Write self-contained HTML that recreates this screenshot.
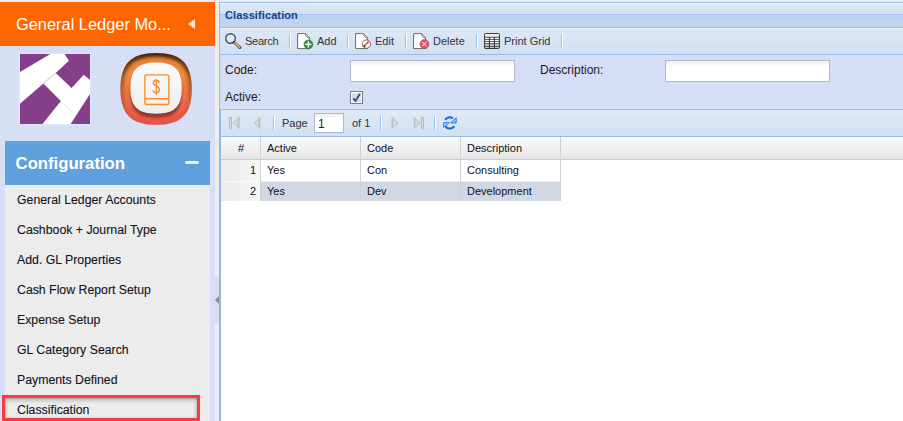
<!DOCTYPE html>
<html><head><meta charset="utf-8">
<style>
*{margin:0;padding:0;box-sizing:border-box}
html,body{width:903px;height:421px;overflow:hidden;background:#fff;font-family:"Liberation Sans",sans-serif}
.a{position:absolute}
#top{left:0;top:0;width:903px;height:2px;background:#ebebeb}
#side{left:0;top:2px;width:215px;height:419px;background:#d7dff6}
#hdr{left:0;top:2px;width:215px;height:44px;background:#ff6600}
#hdr .t{left:16px;top:12px;color:#fff;font-size:16.4px;white-space:nowrap;line-height:20px}
#tri{left:188px;top:19px;width:0;height:0;border-top:5.5px solid transparent;border-bottom:5.5px solid transparent;border-right:7px solid #ffe2cc}
#cfg{left:5px;top:141px;width:205px;height:44px;background:#60a0dd}
#cfg .t{left:10.6px;top:13px;color:#fff;font-weight:bold;font-size:16.7px;line-height:20px;white-space:nowrap}
#minus{left:185px;top:161px;width:14px;height:3px;border-radius:1.5px;background:#e6effa}
#menu{left:5px;top:185px;width:205px;height:236px;background:#ececec}
.mi{position:absolute;left:17px;font-size:12.3px;color:#14141e;white-space:nowrap;line-height:14px;-webkit-text-stroke:0.12px #14141e}
#redbox{left:2px;top:395px;width:198px;height:26px;border:3px solid #fb3a3e;box-shadow:inset 0 2px 4px rgba(0,0,0,.28),inset 0 0 2px rgba(0,0,0,.2)}
#split{left:215px;top:2px;width:4px;height:419px;background:#eeedec}
#splitc{left:215px;top:276px;width:4px;height:48px;background:#dedede}
#splitarr{left:215px;top:296px;width:0;height:0;border-top:4px solid transparent;border-bottom:4px solid transparent;border-right:4px solid #8a8a8a}

#panel{left:219px;top:2px;width:684px;height:419px;background:#fff;border-left:1px solid #99bbe8}
#ttl{left:219px;top:2px;width:684px;height:26px;border-top:1px solid #99bbe8;border-left:1px solid #99bbe8;border-bottom:1px solid #99bbe8;background:linear-gradient(#f2f7fd 0px,#f2f7fd 1px,#dbe7f6 1px,#d2e1f3 11px,#a9c6ea 11px,#a9c6ea 12px,#bad0ee 12px,#c3d7f0 24px)}
#ttl .t{left:5px;top:6px;font-weight:bold;font-size:11px;letter-spacing:0.1px;color:#15428b;line-height:13px}
#tb{left:219px;top:28px;width:684px;height:27px;border-left:1px solid #99bbe8;border-bottom:1px solid #99bbe8;background:linear-gradient(#eef4fb 0px,#eef4fb 1px,#dde8f6 1px,#d2dff1 26px)}
#form{left:219px;top:55px;width:684px;height:54px;background:#d6ddf6;border-left:1px solid #99bbe8}
#pg{left:219px;top:109px;width:684px;height:28px;border-top:1px solid #99bbe8;border-bottom:1px solid #99bbe8;border-left:2px solid #93b6e6;background:linear-gradient(#dfe9f6,#d3e0f1)}
#gl{left:219px;top:137px;width:2px;height:284px;background:#93b6e6}
.tt{position:absolute;font-size:11px;color:#333;line-height:13px;white-space:nowrap}
.sep{position:absolute;width:2px;border-left:1px solid #98c0f4;border-right:1px solid #fff}
.lbl{position:absolute;font-size:12px;color:#1a1a1a;line-height:14px;white-space:nowrap}
.inp{position:absolute;height:22px;width:165px;border:1px solid #b5b8c8;background:linear-gradient(#eef0f0,#fff 6px)}
#gh{left:221px;top:137px;width:682px;height:23px;background:linear-gradient(#fafafa,#e6e6e6);border-bottom:1px solid #c9c9c9}
.gc{position:absolute;font-size:11px;color:#111;line-height:13px;white-space:nowrap}
.vl{position:absolute;width:1px;background:#d0d0d0}
</style></head><body>
<div id="top" class="a"></div>
<div id="side" class="a"></div>
<div id="hdr" class="a"><div class="a t">General Ledger Mo...</div></div>
<div id="tri" class="a"></div>

<!-- purple logo -->
<svg class="a" style="left:20px;top:54px;box-shadow:0 0 0 1px #e2e8fb" width="70" height="70" viewBox="0 0 70 70">
<rect width="70" height="70" fill="#fff"/>
<polygon points="0,0 30.4,0 0,18.1" fill="#843f88"/>
<polygon points="44.5,0 70,0 70,26 63.8,20.7 51.5,33.9 35.7,19 48.9,6.7" fill="#843f88"/>
<polygon points="0,49.7 23.4,29.5 40.9,47.1 22.5,70 0,70" fill="#843f88"/>
<polygon points="70,40.1 70,70 50.6,70" fill="#843f88"/>
<line x1="23.4" y1="29.5" x2="35.7" y2="19" stroke="#d4d4d4" stroke-width="1.2"/>
<line x1="40.9" y1="47.1" x2="55" y2="61" stroke="#e0e0e0" stroke-width="0.7"/>
</svg>

<!-- app icon -->
<svg class="a" style="left:116px;top:48px" width="82" height="84" viewBox="0 0 82 84">
<defs>
<linearGradient id="og" x1="0" y1="0" x2="0" y2="1">
<stop offset="0" stop-color="#e07e34"/>
<stop offset="0.3" stop-color="#f08a3e"/>
<stop offset="0.6" stop-color="#ee7044"/>
<stop offset="1" stop-color="#e6524c"/>
</linearGradient>
<linearGradient id="sg" x1="0" y1="0" x2="0" y2="1">
<stop offset="0" stop-color="#3a2008" stop-opacity=".95"/>
<stop offset="0.35" stop-color="#3a2008" stop-opacity=".45"/>
<stop offset="0.75" stop-color="#3a2008" stop-opacity=".12"/>
<stop offset="1" stop-color="#3a2008" stop-opacity="0"/>
</linearGradient>
<linearGradient id="wg" x1="0" y1="0" x2="0" y2="1">
<stop offset="0" stop-color="#fbfbfb"/>
<stop offset="1" stop-color="#ededed"/>
</linearGradient>
<clipPath id="oc"><path d="M40.10,5.00 C65.09,5.00 75.80,15.77 75.80,40.90 C75.80,66.03 65.09,76.80 40.10,76.80 C15.11,76.80 4.40,66.03 4.40,40.90 C4.40,15.77 15.11,5.00 40.10,5.00 Z"/></clipPath>
<filter id="bl" x="-20%" y="-20%" width="140%" height="140%"><feGaussianBlur stdDeviation="1.5"/></filter>
<filter id="bl2" x="-20%" y="-20%" width="140%" height="140%"><feGaussianBlur stdDeviation="1.1"/></filter>
</defs>
<path d="M40.10,5.00 C65.09,5.00 75.80,15.77 75.80,40.90 C75.80,66.03 65.09,76.80 40.10,76.80 C15.11,76.80 4.40,66.03 4.40,40.90 C4.40,15.77 15.11,5.00 40.10,5.00 Z" fill="url(#og)"/>
<g clip-path="url(#oc)">
<path d="M40.10,5.00 C65.09,5.00 75.80,15.77 75.80,40.90 C75.80,66.03 65.09,76.80 40.10,76.80 C15.11,76.80 4.40,66.03 4.40,40.90 C4.40,15.77 15.11,5.00 40.10,5.00 Z" fill="none" stroke="url(#sg)" stroke-width="6" filter="url(#bl)" transform="translate(0,0.8)"/>
<path d="M40.10,18.40 C58.60,18.40 65.80,25.60 65.80,44.10 C65.80,62.60 58.60,69.80 40.10,69.80 C21.60,69.80 14.40,62.60 14.40,44.10 C14.40,25.60 21.60,18.40 40.10,18.40 Z" fill="#5a1e14" opacity=".6" filter="url(#bl2)"/>
</g>
<path d="M40.10,14.40 C58.60,14.40 65.80,21.60 65.80,40.10 C65.80,58.60 58.60,65.80 40.10,65.80 C21.60,65.80 14.40,58.60 14.40,40.10 C14.40,21.60 21.60,14.40 40.10,14.40 Z" fill="url(#wg)"/>
<g fill="none" stroke="#fa8c2c" stroke-width="1.4">
<rect x="28.9" y="26.9" width="24" height="29.6" rx="2"/>
<line x1="28.9" y1="50.7" x2="52.9" y2="50.7"/>
<path d="M43.3,34.8 C43,33 41.8,32.2 40.3,32.2 C38.5,32.2 37.3,33.3 37.3,34.9 C37.3,36.7 38.9,37.4 40.3,38.1 C41.9,38.8 43.5,39.6 43.5,41.7 C43.5,43.4 42.1,44.6 40.3,44.6 C38.7,44.6 37.4,43.9 37,42.3 M40.3,30.9 V46.4"/>
</g>
</svg>

<div id="cfg" class="a"><div class="a t">Configuration</div></div>
<div id="minus" class="a"></div>
<div id="menu" class="a"></div>
<div class="mi" style="top:193px">General Ledger Accounts</div>
<div class="mi" style="top:223px">Cashbook + Journal Type</div>
<div class="mi" style="top:253px">Add. GL Properties</div>
<div class="mi" style="top:283px">Cash Flow Report Setup</div>
<div class="mi" style="top:313px">Expense Setup</div>
<div class="mi" style="top:343px">GL Category Search</div>
<div class="mi" style="top:373px">Payments Defined</div>
<div class="mi" style="top:403px">Classification</div>
<div id="redbox" class="a"></div>
<div id="split" class="a"></div>
<div id="splitc" class="a"></div>
<div id="splitarr" class="a"></div>

<div id="panel" class="a"></div>
<div id="ttl" class="a"><div class="a t">Classification</div></div>
<div id="tb" class="a"></div>
<!-- toolbar items -->
<svg class="a" style="left:224px;top:32px" width="18" height="18" viewBox="0 0 18 18">
<circle cx="6.5" cy="6.5" r="4.8" fill="#e3e7ee" stroke="#3e4f75" stroke-width="1.4"/>
<line x1="10" y1="10.2" x2="16" y2="15.6" stroke="#3a3f55" stroke-width="2.8" stroke-linecap="round"/>
<line x1="10.9" y1="11" x2="15.5" y2="15.1" stroke="#e9a856" stroke-width="1.8" stroke-linecap="round"/>
</svg>
<div class="tt" style="left:245px;top:35px;letter-spacing:-0.25px">Search</div>
<div class="sep" style="left:289px;top:34px;height:14px"></div>
<svg class="a" style="left:294px;top:30px" width="24" height="22" viewBox="0 0 24 22">
<path d="M3.6,3.6 H11.5 L15.6,8 V18.6 H3.6 Z" fill="#fff" stroke="#6a6a6a" stroke-width="1"/>
<path d="M11.5,3.6 C11,6.5 13,7.6 15.6,8" fill="none" stroke="#777" stroke-width="0.8"/>
<circle cx="14.4" cy="14.4" r="4.4" fill="#2c9a3c" stroke="#1f7a2e" stroke-width=".7"/>
<path d="M14.4,11.3 V17.5 M11.3,14.4 H17.5" stroke="#fff" stroke-width="1.4"/>
</svg>
<div class="tt" style="left:317px;top:35px">Add</div>
<div class="sep" style="left:347px;top:34px;height:14px"></div>
<svg class="a" style="left:352px;top:30px" width="24" height="22" viewBox="0 0 24 22">
<path d="M3.6,3.6 H11.5 L15.6,8 V18.6 H3.6 Z" fill="#fff" stroke="#6a6a6a" stroke-width="1"/>
<path d="M11.5,3.6 C11,6.5 13,7.6 15.6,8" fill="none" stroke="#777" stroke-width="0.8"/>
<circle cx="14.4" cy="14.1" r="4.2" fill="#fff" stroke="#6e3c3c" stroke-width=".8"/>
<line x1="12.5" y1="16" x2="15.8" y2="12.6" stroke="#cf8a2a" stroke-width="1.8"/>
<line x1="15.3" y1="13.1" x2="16.6" y2="11.8" stroke="#f21" stroke-width="1.8"/>
<line x1="11.8" y1="16.7" x2="12.8" y2="15.7" stroke="#111" stroke-width="1.8"/>
</svg>
<div class="tt" style="left:375px;top:35px">Edit</div>
<div class="sep" style="left:405px;top:34px;height:14px"></div>
<svg class="a" style="left:410px;top:30px" width="24" height="22" viewBox="0 0 24 22">
<path d="M3.6,3.6 H11.5 L15.6,8 V18.6 H3.6 Z" fill="#fff" stroke="#6a6a6a" stroke-width="1"/>
<path d="M11.5,3.6 C11,6.5 13,7.6 15.6,8" fill="none" stroke="#777" stroke-width="0.8"/>
<circle cx="14.4" cy="14.1" r="4.5" fill="#f04c58" stroke="#555" stroke-width=".5"/>
<path d="M12.2,11.9 L16.6,16.3 M16.6,11.9 L12.2,16.3" stroke="#fff" stroke-width="1"/>
</svg>
<div class="tt" style="left:433px;top:35px">Delete</div>
<div class="sep" style="left:476px;top:34px;height:14px"></div>
<svg class="a" style="left:484px;top:33px" width="16" height="16" viewBox="0 0 16 16">
<defs><linearGradient id="ph" x1="0" y1="0" x2="0" y2="1"><stop offset="0" stop-color="#fff"/><stop offset="1" stop-color="#d8d8d8"/></linearGradient></defs>
<rect x=".6" y=".6" width="14.8" height="14.8" rx="1.4" fill="#fff" stroke="#3a3a3a" stroke-width="1.1"/>
<rect x="1.2" y="1.2" width="13.6" height="2.8" fill="url(#ph)"/>
<rect x="1.2" y="11" width="13.6" height="2.3" fill="#c4c4c4"/>
<path d="M.6,4.35 H15.4 M.6,6.45 H15.4 M.6,8.55 H15.4 M.6,10.6 H15.4 M.6,13.5 H15.4" stroke="#3c3c3c" stroke-width=".85"/>
<path d="M5.4,4 V15.4 M10.4,4 V15.4" stroke="#333" stroke-width="1"/>
</svg>
<div class="tt" style="left:504px;top:35px">Print Grid</div>
<div class="sep" style="left:561px;top:34px;height:14px"></div>

<div id="form" class="a"></div>
<div class="lbl" style="left:225px;top:63px">Code:</div>
<div class="inp" style="left:350px;top:60px"></div>
<div class="lbl" style="left:540px;top:63px">Description:</div>
<div class="inp" style="left:665px;top:60px"></div>
<div class="lbl" style="left:225px;top:90px">Active:</div>
<svg class="a" style="left:350px;top:91px" width="13" height="13" viewBox="0 0 13 13">
<rect x=".5" y=".5" width="12" height="12" fill="#fff" stroke="#7d7d7d"/>
<rect x="2" y="2" width="9" height="9" fill="#dcdee4"/>
<path d="M3.3,7.2 L5.5,10 L9.9,2.8" fill="none" stroke="#2f4a9c" stroke-width="1.8"/>
</svg>

<div id="pg" class="a"></div>
<div id="gl" class="a"></div>
<!-- paging icons -->
<svg class="a" style="left:224px;top:112px" width="40" height="22" viewBox="0 0 40 22">
<defs><linearGradient id="gg" x1="0" y1="0" x2="1" y2="0"><stop offset="0" stop-color="#c4c4c4"/><stop offset="0.5" stop-color="#dadada"/><stop offset="1" stop-color="#bdbdbd"/></linearGradient>
<linearGradient id="gb" x1="0" y1="0" x2="1" y2="0"><stop offset="0" stop-color="#b8b8b8"/><stop offset="0.5" stop-color="#d8d8d8"/><stop offset="1" stop-color="#b0b0b0"/></linearGradient></defs>
<rect x="5.2" y="5.2" width="2.6" height="11.8" fill="url(#gb)" stroke="#b4b4b4" stroke-width=".5"/>
<path d="M15.2,5.2 L9.2,10.9 L15.2,16.6 Z" fill="url(#gg)" stroke="#b2b2b2" stroke-width=".6" stroke-linejoin="round"/>
<path d="M36,5.2 L30,10.9 L36,16.6 Z" fill="url(#gg)" stroke="#b2b2b2" stroke-width=".6" stroke-linejoin="round"/>
</svg>
<div class="sep" style="left:273px;top:116px;height:14px"></div>
<div class="tt" style="left:282px;top:117px">Page</div>
<div class="a" style="left:314px;top:113px;width:30px;height:20px;border:1px solid #b5b8c8;background:linear-gradient(#eef0f0,#fff 5px)"></div>
<div class="lbl" style="left:318px;top:117px">1</div>
<div class="tt" style="left:352px;top:117px">of 1</div>
<div class="sep" style="left:380px;top:116px;height:14px"></div>
<svg class="a" style="left:388px;top:112px" width="40" height="22" viewBox="0 0 40 22">
<path d="M4,5.2 L10,10.9 L4,16.6 Z" fill="url(#gg)" stroke="#b2b2b2" stroke-width=".6" stroke-linejoin="round"/>
<path d="M26.2,5.2 L32.2,10.9 L26.2,16.6 Z" fill="url(#gg)" stroke="#b2b2b2" stroke-width=".6" stroke-linejoin="round"/>
<rect x="33.2" y="5.2" width="2.6" height="11.8" fill="url(#gb)" stroke="#b4b4b4" stroke-width=".5"/>
</svg>
<div class="sep" style="left:434px;top:116px;height:14px"></div>
<svg class="a" style="left:438px;top:112px" width="24" height="22" viewBox="0 0 24 22">
<g fill="none">
<path d="M7.2,7.8 A5.6,5.6 0 0 1 15,6.4" stroke="#1a72da" stroke-width="2.3"/>
<path d="M7.2,14.2 A5.6,5.6 0 0 0 16.4,14.2" stroke="#1a72da" stroke-width="2.3"/>
</g>
<path d="M12.6,10.9 L18.2,10.9 L18.2,5.9 Z" fill="#8cc6f8" stroke="#1a72da" stroke-width=".9" stroke-linejoin="round"/>
<path d="M11.2,10.7 L5.6,10.7 L5.6,15.3 Z" fill="#a6d4fa" stroke="#1a72da" stroke-width=".9" stroke-linejoin="round"/>
</svg>

<!-- grid -->
<div id="gh" class="a"></div>
<div class="a" style="left:221px;top:160px;width:40px;height:41px;background:linear-gradient(90deg,#ebebeb,#f6f6f6)"></div>
<div class="a" style="left:221px;top:181px;width:40px;height:1px;background:#fafafa"></div>
<div class="a" style="left:261px;top:182px;width:300px;height:19px;background:#d0d8e6"></div>
<div class="a" style="left:261px;top:181px;width:300px;height:1px;background:#ededed"></div>
<div class="vl" style="left:260px;top:137px;height:64px"></div>
<div class="vl" style="left:360px;top:137px;height:64px"></div>
<div class="vl" style="left:460px;top:137px;height:64px"></div>
<div class="vl" style="left:560px;top:137px;height:64px"></div>
<div class="gc" style="left:238px;top:142px">#</div>
<div class="gc" style="left:267px;top:142px">Active</div>
<div class="gc" style="left:367px;top:142px">Code</div>
<div class="gc" style="left:467px;top:142px">Description</div>
<div class="gc" style="left:250px;top:164px">1</div>
<div class="gc" style="left:267px;top:164px">Yes</div>
<div class="gc" style="left:367px;top:164px">Con</div>
<div class="gc" style="left:467px;top:164px">Consulting</div>
<div class="gc" style="left:250px;top:185px">2</div>
<div class="gc" style="left:267px;top:185px">Yes</div>
<div class="gc" style="left:367px;top:185px">Dev</div>
<div class="gc" style="left:467px;top:185px">Development</div>
</body></html>
